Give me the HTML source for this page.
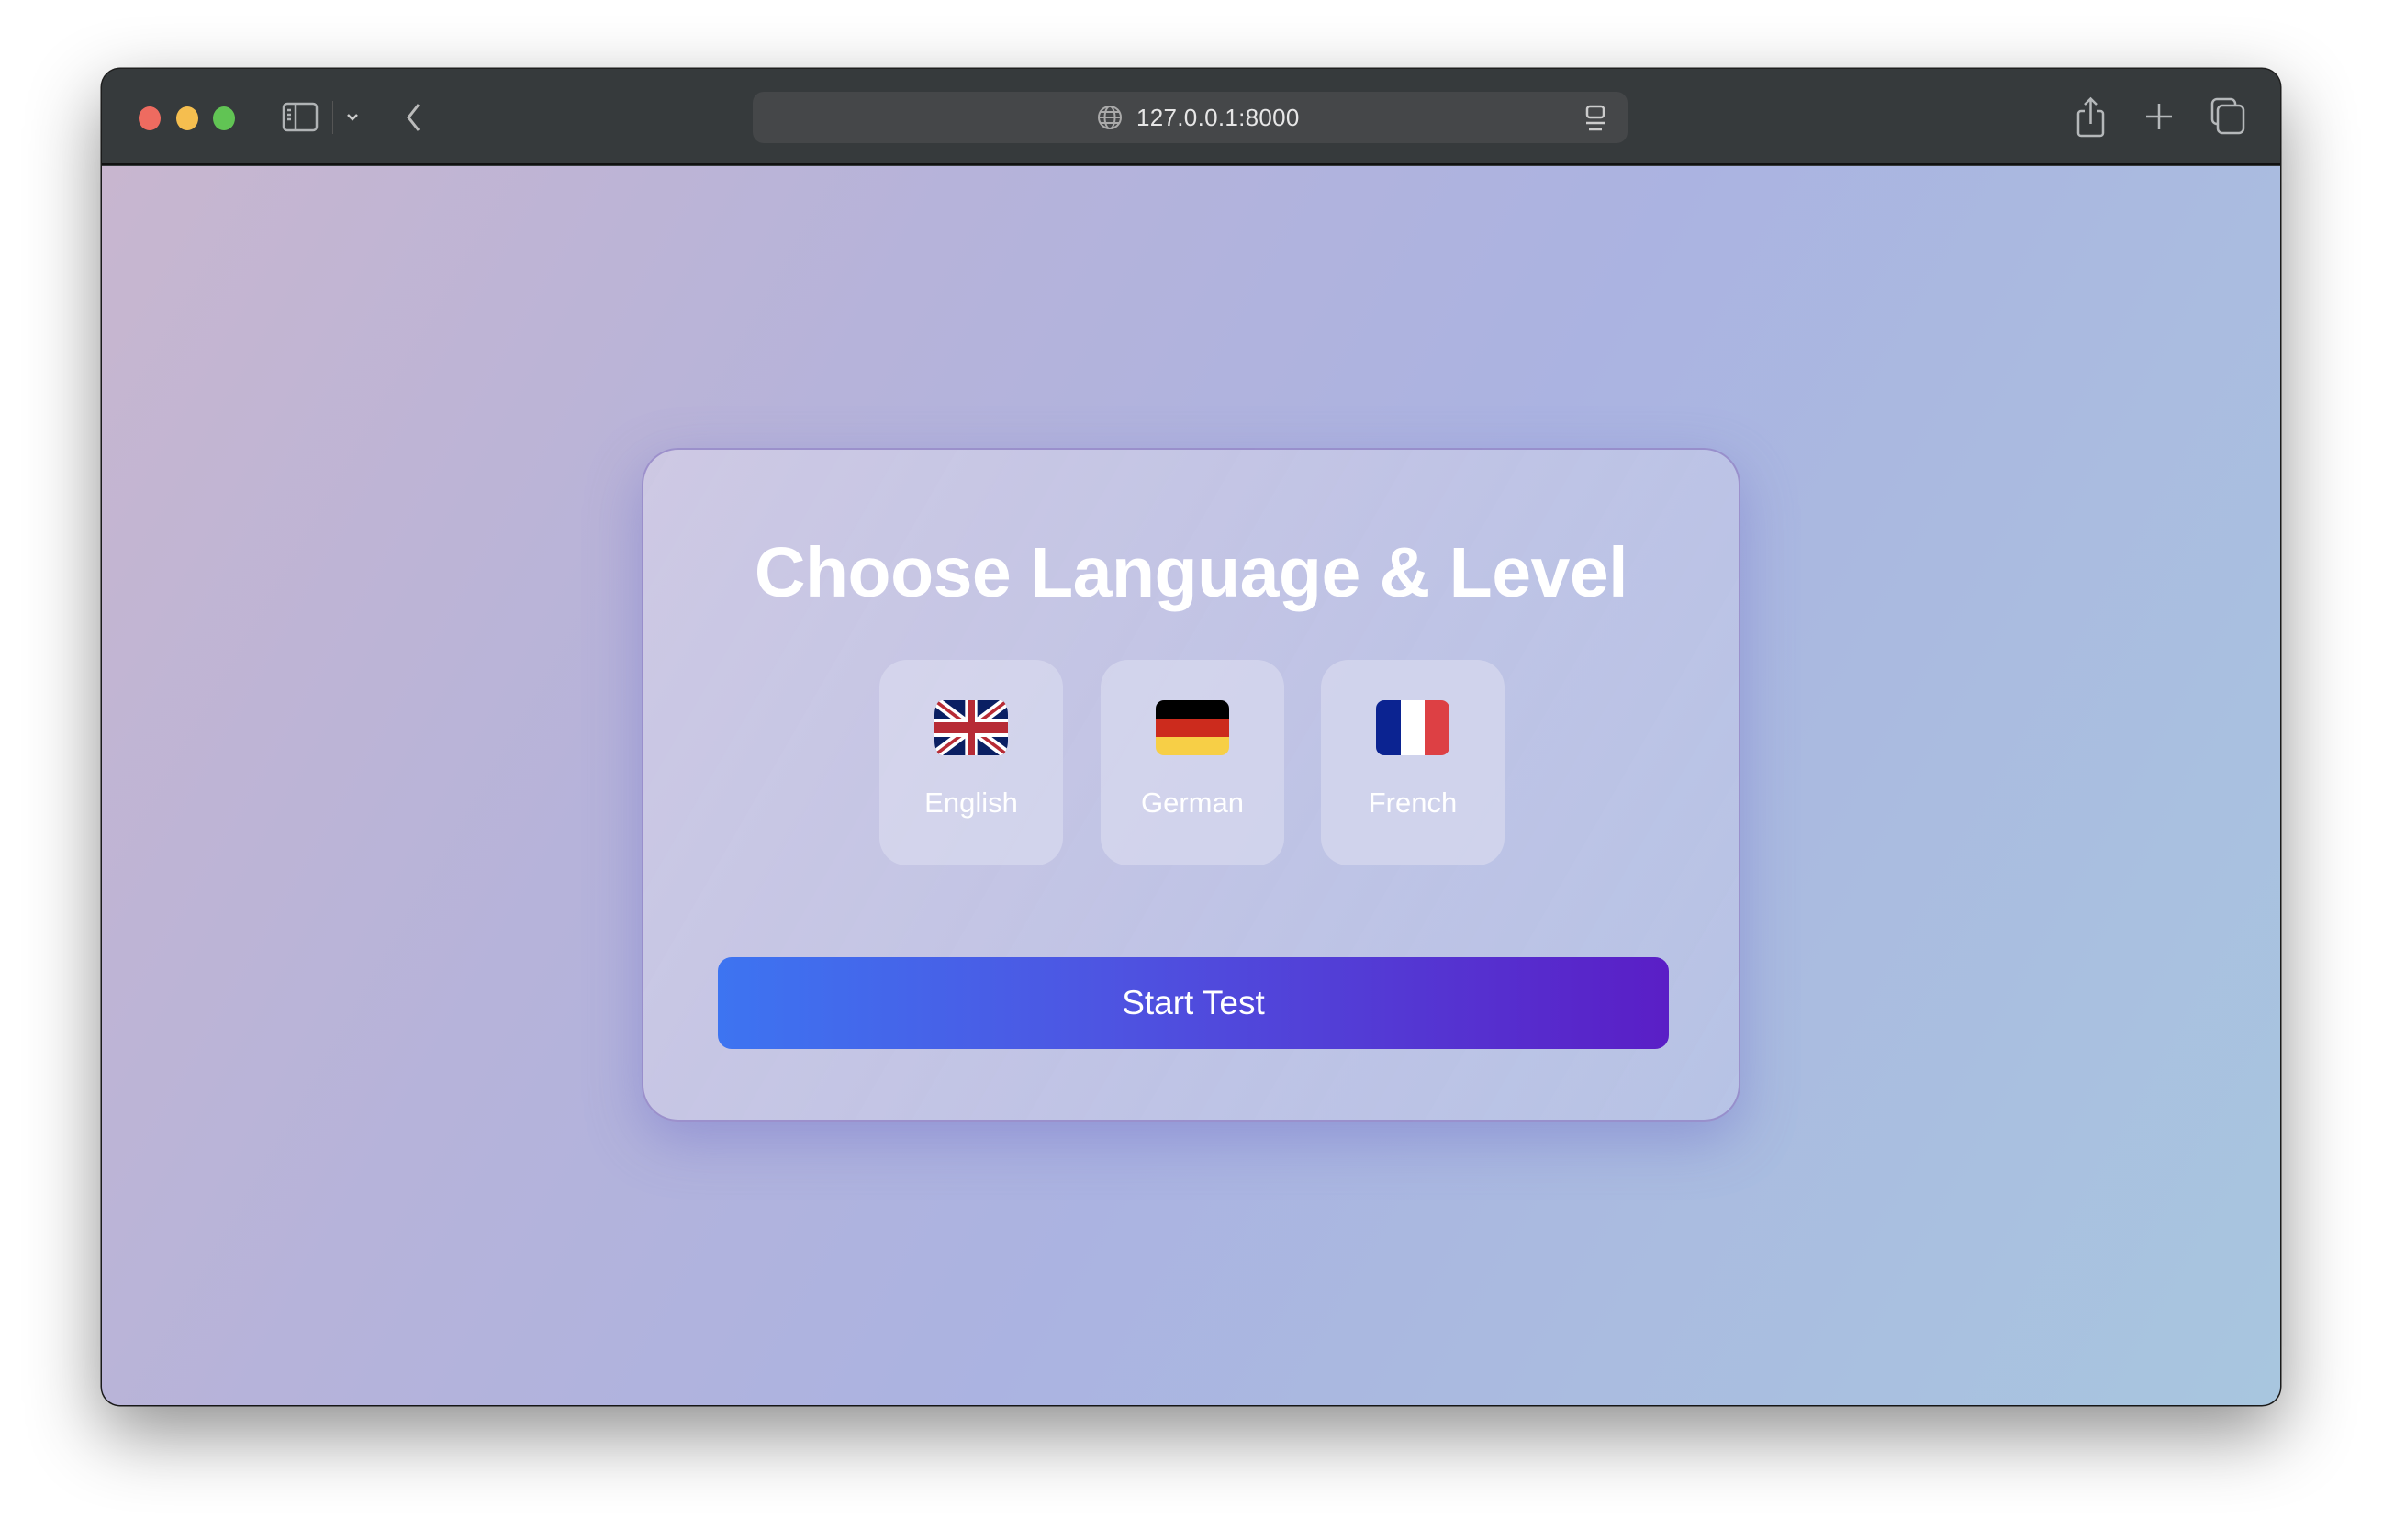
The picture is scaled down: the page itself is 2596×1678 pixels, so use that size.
<!DOCTYPE html>
<html><head><meta charset="utf-8"><style>
*{margin:0;padding:0;box-sizing:border-box}
html,body{width:2596px;height:1678px;background:#fff;overflow:hidden;font-family:"Liberation Sans",sans-serif}
.win{position:absolute;left:111px;top:75px;width:2373px;height:1456px;border-radius:20px;overflow:hidden;background:#363a3c;box-shadow:0 30px 80px rgba(0,0,0,.45),0 0 0 1.5px #222}
.bar{position:absolute;left:0;top:0;width:100%;height:105px;background:#363a3c;border-bottom:2px solid #111}
.dot{position:absolute;top:117px;width:24px;height:26px;border-radius:50%}
.url{position:absolute;left:709px;top:25px;width:953px;height:56px;border-radius:12px;background:#454749}
.url span{position:absolute;left:418px;top:13px;color:#e6e6e6;font-size:26px;letter-spacing:.3px}
.content{position:absolute;left:0;top:106px;width:100%;height:1350px;background:linear-gradient(120deg,#c8b6cf 0%,#b6b3da 30%,#abb3e1 55%,#a8c6df 100%)}
.card{position:absolute;left:588px;top:307px;width:1197px;height:734px;border-radius:40px;background:linear-gradient(120deg,rgba(214,210,232,.7),rgba(192,200,232,.6));border:2px solid rgba(140,125,195,.75);box-shadow:0 20px 60px rgba(110,110,200,.45)}
h1{position:absolute;left:0;width:100%;top:90px;text-align:center;color:#fff;font-size:77px;font-weight:bold;letter-spacing:-.5px}
.tile{position:absolute;top:229px;width:200px;height:224px;border-radius:30px;background:rgba(220,222,240,.6)}
.tile svg{position:absolute;left:60px;top:44px}
.tile div{position:absolute;left:0;width:100%;top:138px;text-align:center;color:#fff;font-size:31px}
.btn{position:absolute;left:81px;top:553px;width:1036px;height:100px;border-radius:15px;background:linear-gradient(90deg,#3d74f1,#4d55e2 40%,#5a1ec6);color:#fff;font-size:37px;text-align:center;line-height:100px}
</style></head><body>
<div class="win">
<div class="bar">
<div class="dot" style="left:40px;top:41px;background:#ee6b60"></div>
<div class="dot" style="left:81px;top:41px;background:#f5be4f"></div>
<div class="dot" style="left:121px;top:41px;background:#61c454"></div>
<svg style="position:absolute;left:196px;top:36px" width="40" height="34" viewBox="0 0 40 34" fill="none" stroke="#b0b3b5" stroke-width="2.5"><rect x="2" y="2" width="36" height="29" rx="4"/><line x1="15" y1="2" x2="15" y2="31"/><line x1="6" y1="9" x2="10" y2="9"/><line x1="6" y1="14" x2="10" y2="14"/><line x1="6" y1="19" x2="10" y2="19"/></svg>
<div style="position:absolute;left:251px;top:35px;width:1px;height:36px;background:#555"></div>
<svg style="position:absolute;left:266px;top:48px" width="14" height="10" viewBox="0 0 14 10" fill="none" stroke="#ccc" stroke-width="2.5"><path d="M2 2l5 5 5-5"/></svg>
<svg style="position:absolute;left:329px;top:36px" width="20" height="34" viewBox="0 0 20 34" fill="none" stroke="#bbb" stroke-width="3"><path d="M16 3L5 17l11 14"/></svg>
<div class="url"><svg style="position:absolute;left:375px;top:14px" width="28" height="28" viewBox="0 0 28 28" fill="none" stroke="#aaa" stroke-width="2"><circle cx="14" cy="14" r="12"/><ellipse cx="14" cy="14" rx="5.5" ry="12"/><line x1="2" y1="14" x2="26" y2="14"/><line x1="4" y1="8" x2="24" y2="8"/><line x1="4" y1="20" x2="24" y2="20"/></svg><span>127.0.0.1:8000</span>
<svg style="position:absolute;left:906px;top:14px" width="24" height="30" viewBox="0 0 24 30" fill="none" stroke="#ccc" stroke-width="2.5"><rect x="3" y="2" width="18" height="12" rx="3"/><line x1="2" y1="20" x2="22" y2="20"/><line x1="5" y1="27" x2="19" y2="27"/></svg></div>
<svg style="position:absolute;left:2150px;top:30px" width="34" height="46" viewBox="0 0 34 46" fill="none" stroke="#b5b8ba" stroke-width="2.5"><path d="M10 16H6a3 3 0 0 0-3 3v21a3 3 0 0 0 3 3h21a3 3 0 0 0 3-3V19a3 3 0 0 0-3-3h-4"/><path d="M16.5 30V3M10 9l6.5-6.5L23 9"/></svg>
<svg style="position:absolute;left:2224px;top:35px" width="34" height="34" viewBox="0 0 34 34" stroke="#b5b8ba" stroke-width="2.5"><path d="M17 3v28M3 17h28"/></svg>
<svg style="position:absolute;left:2297px;top:31px" width="40" height="42" viewBox="0 0 40 42" fill="none" stroke="#b5b8ba" stroke-width="2.5"><rect x="2" y="2" width="25" height="27" rx="5"/><rect x="8" y="9" width="28" height="30" rx="5" fill="#363a3c"/></svg>
</div>
<div class="content">
<div class="card">
<h1>Choose Language &amp; Level</h1>
<div class="tile" style="left:257px"><svg width="80" height="60" viewBox="0 0 60 30" preserveAspectRatio="none"><defs><clipPath id="c"><rect width="60" height="30" rx="6" ry="8"/></clipPath></defs><g clip-path="url(#c)"><rect width="60" height="30" fill="#0a1f63"/><path d="M0 0L60 30M60 0L0 30" stroke="#fff" stroke-width="6"/><path d="M0 0L60 30M60 0L0 30" stroke="#b72b35" stroke-width="2"/><path d="M30 0v30M0 15h60" stroke="#fff" stroke-width="10"/><path d="M30 0v30M0 15h60" stroke="#b72b35" stroke-width="6"/></g></svg><div>English</div></div>
<div class="tile" style="left:498px"><svg width="80" height="60" viewBox="0 0 80 60"><defs><clipPath id="d"><rect width="80" height="60" rx="9"/></clipPath></defs><g clip-path="url(#d)"><rect width="80" height="20" fill="#000"/><rect y="20" width="80" height="20" fill="#cc2b1d"/><rect y="40" width="80" height="20" fill="#f7cf46"/></g></svg><div>German</div></div>
<div class="tile" style="left:738px"><svg width="80" height="60" viewBox="0 0 80 60"><defs><clipPath id="f"><rect width="80" height="60" rx="9"/></clipPath></defs><g clip-path="url(#f)"><rect width="27" height="60" fill="#0b2391"/><rect x="27" width="26" height="60" fill="#fff"/><rect x="53" width="27" height="60" fill="#dd4044"/></g></svg><div>French</div></div>
<div class="btn">Start Test</div>
</div>
</div>
</div>
</body></html>
